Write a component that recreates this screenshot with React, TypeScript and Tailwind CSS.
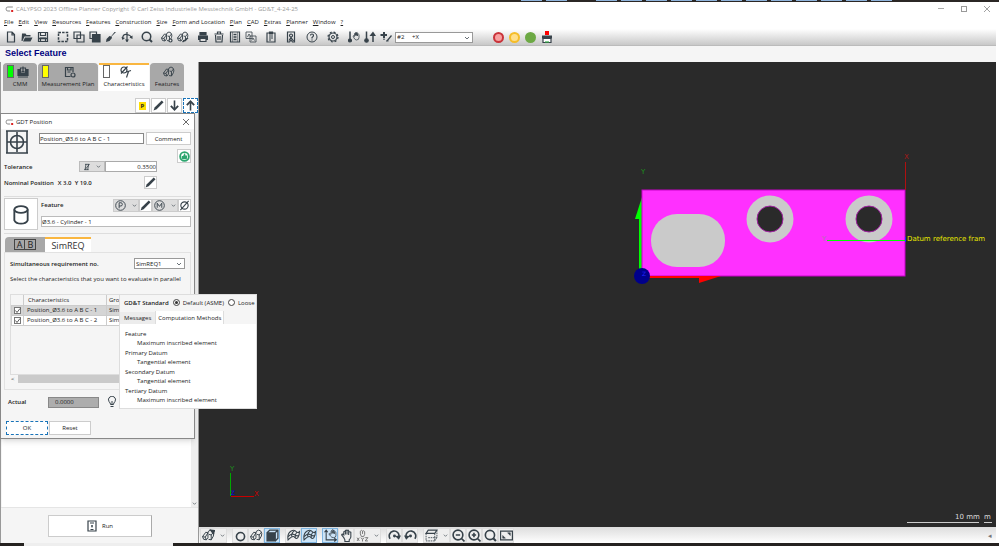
import type { ReactNode } from "react";
import { clsx } from "clsx";

const Icon = ({ name, className = "size-3" }: { name: string; className?: string }) => (
  <svg
    viewBox="0 0 24 24"
    fill="none"
    stroke="currentColor"
    strokeWidth="2.4"
    className={clsx("shrink-0 text-[#37424a]", className)}
    aria-hidden="true"
  >
    {icons[name]}
  </svg>
);

const gem = (
  <g strokeWidth="1.8">
    <path d="M1 14 7 6l4 1v9l-3 4-5-1z" />
    <path d="M1 14l5 1 5-8M6 15l2 5" />
    <path d="M12 4q4-4 8 0 3 4 1 9l-4 7-5-1M12 4l-1 3M13 10l4 1 4-5M17 11v9" />
  </g>
);

const icons: Record<string, ReactNode> = {
  logo: (
    <>
      <path d="M22 6H7Q2 6 2 11v2q0 5 5 5h7" stroke="#888" strokeWidth="3" />
      <path d="M17 15h6v6h-6z" fill="#d22" stroke="none" />
    </>
  ),
  file: <path d="M5 2h9l5 5v15H5zM14 2v6h5" />,
  open: <path d="M2 5h7l2 3h8v3H7l-4 9H1zM8 13h15l-4 8H4z" fill="currentColor" stroke="none" />,
  save: (
    <>
      <path d="M3 3h18v18H3zM7 21v-7h10v7" />
      <path d="M7 3h10v6H7z" />
      <path d="M3 15h18" strokeWidth="3" />
    </>
  ),
  marquee: <path d="M3 3h18v18H3z" strokeDasharray="5 2.2" strokeWidth="3" />,
  copy: <path d="M2 2h13v13H2zM8 8h14v14H8z" />,
  copyFill: (
    <>
      <path d="M2 2h13v13H2z" />
      <path d="M7 7h15v15H7z" fill="currentColor" />
    </>
  ),
  brush: <path d="m22 2-9 9 1 3-5 6-7 2 1-6 6-6 3 1 7-9z" fill="currentColor" stroke="none" />,
  balance: (
    <>
      <path d="M12 2v20M3 15q1-10 9-8t9 6" />
      <path d="m1 12 2 6 5-4M17 13l6 3V9" fill="currentColor" stroke="none" />
      <path d="m8 17 4 5 4-5z" fill="currentColor" stroke="none" />
    </>
  ),
  search: (
    <>
      <circle cx="11" cy="11" r="8.5" strokeWidth="3" />
      <path d="m17 17 5 5" strokeWidth="4" />
    </>
  ),
  gem,
  gemGear: (
    <>
      {gem}
      <circle cx="19" cy="19" r="3" fill="#eee" strokeWidth="2.4" />
    </>
  ),
  gemPen: (
    <>
      {gem}
      <path d="m11 22 11-8" strokeWidth="3" />
    </>
  ),
  gemArrow: (
    <>
      {gem}
      <path d="m16 2 7 1-2 6z" fill="currentColor" />
    </>
  ),
  print: (
    <>
      <path d="M6 3h12v5H6z" fill="currentColor" />
      <path d="M2 9h20v9H2z" fill="currentColor" stroke="none" />
      <path d="M6 15h12v6H6z" fill="#ddd" />
    </>
  ),
  trash: <path d="M3 6h18M9 5V2h6v3M5 8l1 14h12l1-14M10 10v8M14 10v8" />,
  film: (
    <>
      <path d="M3 2h18v20H3z" />
      <path d="M7 3v18M17 3v18" strokeDasharray="2 2" />
      <path d="M9 7h6M9 12h6M9 17h6" strokeWidth="3" />
    </>
  ),
  windows: (
    <g strokeWidth="1.6">
      <path d="M2 2h12v13H2zM10 10h12v12H10z" />
      <path d="M5 12l3-6 3 5M13 19l3-5 3 5" />
    </g>
  ),
  clip: <path d="M4 4h16v18H4zM9 2h6v4H9zM8 10h8M8 14h8M8 18h4" />,
  report: <path d="M5 2h14v20h-4l-3-4-3 4H5zM12 6a3 3 0 1 0 .1 0M8 19l4-6 5 7" />,
  help: (
    <>
      <circle cx="12" cy="12" r="10" strokeWidth="2" />
      <path d="M9 9q0-3 3-3t3 3q0 2-3 4v2M12 17v2" />
    </>
  ),
  gear: (
    <>
      <circle cx="12" cy="12" r="8" />
      <circle cx="12" cy="12" r="10" strokeDasharray="4 3.85" />
      <circle cx="12" cy="12" r="3" strokeWidth="2" />
    </>
  ),
  probeHand: (
    <>
      <path d="M4 1v17" strokeWidth="3" />
      <circle cx="4" cy="19" r="3" fill="currentColor" />
      <path d="M12 14l-2-4q1-2 3 1V5q1-2 2 0v4-6q1-2 2 0v6-5q2-2 2 0v6-3q2-2 3 0v6q0 5-5 5-3 0-5-4z" strokeWidth="1.6" />
    </>
  ),
  probeUp: (
    <>
      <path d="M5 1v17M18 22V5" strokeWidth="3" />
      <circle cx="5" cy="19" r="3.5" fill="currentColor" />
      <path d="m11 10 7-9 6 9z" fill="currentColor" stroke="none" />
    </>
  ),
  probePath: (
    <>
      <path d="M1 8h13M8 2v12" strokeWidth="4" />
      <path d="M8 15v3M14 20l9-11M17 20h-5" />
    </>
  ),
  magazine: (
    <>
      <path d="M8 0h8v8H8z" fill="#f00" stroke="none" />
      <path d="M2 9h20v6H2z" fill="currentColor" stroke="none" />
      <path d="M4 15h16v8H4z" fill="#fff" />
      <path d="M8 22h8" stroke="#3a4" />
    </>
  ),
  cmm: (
    <>
      <path d="M2 7h20v12H2z" fill="currentColor" />
      <path d="M7 4h10v10H7z" fill="#a8a8a8" />
      <path d="M12 1v10M9 11h6M2 22h20" strokeWidth="2.4" />
    </>
  ),
  plan: (
    <>
      <path d="M18 12V3H3v18h10M7 3v5h7V3M7 12h6" />
      <circle cx="18" cy="18" r="4" />
    </>
  ),
  chars: (
    <>
      <circle cx="8" cy="8" r="6" />
      <path d="M2 15 15 1M13 12l9-3M17 11l-4 12" />
    </>
  ),
  pencil: <path d="m1 23 3-7L19 1l4 4L8 20z" fill="currentColor" stroke="none" />,
  down: (
    <>
      <path d="M12 1v18" strokeWidth="3.5" />
      <path d="m4 13 8 8 8-8" strokeWidth="4" />
    </>
  ),
  up: (
    <>
      <path d="M12 23V5" strokeWidth="3.5" />
      <path d="m4 11 8-8 8 8" strokeWidth="4" />
    </>
  ),
  chevron: <path d="m4 8 8 8 8-8" strokeWidth="3" />,
  position: (
    <g strokeWidth="1.6">
      <path d="M1 1h22M2 1v22M1 23h22M22 1v22" />
      <circle cx="12" cy="12" r="6.5" />
      <path d="M12 2v20M2 12h20" />
    </g>
  ),
  thumb: (
    <>
      <circle cx="12" cy="12" r="9.5" fill="#fff" stroke="#2da66f" strokeWidth="4" />
      <path d="M6 11h3l3-6q2 0 2 5h4l-1 8H9l-3-1z" fill="#2da66f" stroke="none" />
    </>
  ),
  cylinder: (
    <g strokeWidth="2.2">
      <ellipse cx="12" cy="6" rx="8" ry="4" />
      <path d="M4 6v13q2 4 8 4t8-4V6" />
    </g>
  ),
  circleP: (
    <g strokeWidth="2">
      <circle cx="12" cy="12" r="10.5" />
      <path d="M9 18V6h4q3 0 3 3.500t-3 3.500H9" />
    </g>
  ),
  circleM: (
    <g strokeWidth="2">
      <circle cx="12" cy="12" r="10.5" />
      <path d="M7 17V7l5 7 5-7v10" />
    </g>
  ),
  diameter: (
    <>
      <circle cx="12" cy="12" r="8" />
      <path d="M3 22 21 2" />
    </>
  ),
  hash: <path d="M9 3 6 21M17 3l-3 18M6 4h13M4 20h13M6 20 19 4" />,
  bulb: <path d="M9 17q0-3-3-6a7 7 0 1 1 12 0q-3 3-3 6zM9 21h6M12 17v-7" strokeWidth="2" />,
  run: (
    <>
      <path d="M4 2h16v20H4z" strokeWidth="2.4" />
      <path d="M8 6h8M12 10v5m-2-3h4M9 19h6" strokeWidth="2" />
    </>
  ),
  ring: <circle cx="12" cy="14" r="7.5" strokeWidth="3" />,
  cube: (
    <>
      <path d="M2 7h15v15H2z" fill="currentColor" />
      <path d="M2 7 7 2h15v15l-5 5M17 7l5-5" />
    </>
  ),
  surface: (
    <g strokeWidth="2">
      <path d="M2 20Q0 9 7 4q7-4 10 1 3 3 6 0 0 7-3 11-3 3-5 0-3-4-7-1-3 2-6 5z" />
      <path d="M2 14q6-6 11-4 5 4 9 2M9 14q-2-6 5-11M15 16q-1-5 3-10" />
    </g>
  ),
  axesHand: (
    <g strokeWidth="2">
      <path d="M4 3v17h18M1 6l3-4 3 4M19 17l4 3-4 3" />
      <path d="M12 13l-3-4q1-2 4 1V4q1-2 2 0v4-6q1-2 2 0v6-5q2-2 2 0v6-3q2-2 3 0v6q0 4-4 4-4 0-6-3z" strokeWidth="1.5" />
    </g>
  ),
  hand: (
    <path
      d="M7 16 3 11q1-3 4 0V5q1.500-2 3 0v5V3q1.500-2 3 0v7V3q2-2 3 0v8V6q2-2 4 0v9q-1 3-3 5v3H9v-3z"
      strokeWidth="2"
    />
  ),
  xyz: (
    <g strokeWidth="1.8" stroke="#777">
      <path d="M8 9V4q2-3 4 0 3-2 4 1v5l-2 4h-4zM12 4v5M2 16l4 6M6 16l-4 6M9 16l3 3 3-3M12 19v4M17 16h5l-5 6h5" />
    </g>
  ),
  rotateCw: (
    <>
      <path d="M4 18A9 9 0 1 1 20 15" strokeWidth="3" />
      <path d="m13 13 7 7 4-8z" fill="currentColor" stroke="none" />
      <circle cx="12" cy="13" r="1.500" fill="currentColor" />
    </>
  ),
  rotateCcw: (
    <>
      <path d="M20 18A9 9 0 1 0 4 15" strokeWidth="3" />
      <path d="m11 13-7 7-4-8z" fill="currentColor" stroke="none" />
      <circle cx="12" cy="13" r="1.500" fill="currentColor" />
    </>
  ),
  box: (
    <>
      <path d="M2 8 6 2h16l-4 6z" strokeWidth="2" />
      <path d="M2 8v14h16V8M22 2v14l-4 6M6 16h16" strokeWidth="1.6" strokeDasharray="3 1.5" />
    </>
  ),
  zoomOut: (
    <>
      <circle cx="11" cy="11" r="9" strokeWidth="3" />
      <path d="m17 17 6 6M7 11h8" strokeWidth="3" />
    </>
  ),
  zoomIn: (
    <>
      <circle cx="11" cy="11" r="9" strokeWidth="3" />
      <path d="m17 17 6 6M7 11h8M11 7v8" strokeWidth="3" />
    </>
  ),
  fit: (
    <>
      <path d="M1 4h22v16H1z" />
      <path d="M5 17v-5l5 5zM19 7v5l-5-5z" fill="currentColor" strokeWidth="1" />
    </>
  ),
};

const toolGroups: { gap: string; items: string[] }[] = [
  { gap: "ml-[3px]", items: ["file", "open", "save"] },
  { gap: "ml-1", items: ["marquee", "copy", "copyFill", "brush", "balance"] },
  { gap: "ml-1", items: ["search"] },
  { gap: "ml-1", items: ["gemGear", "gemPen"] },
  { gap: "ml-1", items: ["print", "trash", "film", "windows"] },
  { gap: "ml-1", items: ["clip"] },
  { gap: "ml-1", items: ["report"] },
  { gap: "ml-[5px]", items: ["help"] },
  { gap: "ml-[5px]", items: ["gear"] },
  { gap: "ml-[5px]", items: ["probeHand", "probeUp", "probePath"] },
];

const menus = [
  "File",
  "Edit",
  "View",
  "Resources",
  "Features",
  "Construction",
  "Size",
  "Form and Location",
  "Plan",
  "CAD",
  "Extras",
  "Planner",
  "Window",
  "?",
];

const Header = () => (
  <header className="shrink-0">
    <div className="flex h-[2px] bg-[#2b2725] pl-[521px] gap-1">
      {Array.from({ length: 15 }, (_, n) => (
        <span
          key={n}
          className={clsx("h-px w-[21px]", n === 2 ? "bg-[#2b2725]" : "bg-[#8fb4dc]")}
        />
      ))}
    </div>
    <div className="flex h-[13px] items-center bg-white pl-[5px] text-[#999]">
      <Icon name="logo" className="h-2 w-[9px]" />
      <h1 className="ml-[2px]">
        CALYPSO 2023 Offline Planner Copyright © Carl Zeiss Industrielle Messtechnik GmbH - GD&T_4-24-25
      </h1>
      <div className="ml-auto flex items-center gap-[17px] pr-[9px]">
        <button aria-label="Minimize" className="h-px w-[6px] bg-[#aaa]" />
        <button aria-label="Maximize" className="size-[6px] border border-[#999]" />
        <button aria-label="Close">
          <svg viewBox="0 0 6 6" className="size-[6px]" stroke="#888" strokeWidth="0.8">
            <path d="m0 0 6 6M6 0 0 6" />
          </svg>
        </button>
      </div>
    </div>
    <nav className="flex h-[14px] items-center gap-[5px] bg-white pl-1">
      {menus.map((menu) => (
        <button key={menu} className="whitespace-nowrap">
          <span className="underline">{menu[0]}</span>
          {menu.slice(1)}
        </button>
      ))}
    </nav>
    <div className="mr-[3px] flex h-[17px] items-center border-b border-[#bbb] bg-linear-to-b from-white to-[#c8c8c8]">
      {toolGroups.map((group) => (
        <div key={group.items[0]} className={clsx("flex", group.gap)}>
          {group.items.map((name) => (
            <button key={name} aria-label={name} className="flex w-4 justify-center">
              <Icon name={name} />
            </button>
          ))}
        </div>
      ))}
      <Select label="Probe" value={"#2\u00a0\u00a0\u00a0\u00a0\u00a0+X"} className="ml-px h-[11px] w-[78px] bg-white" />
      <div className="ml-[20px] flex items-center gap-[5px]">
        <button aria-label="Stop" className="size-[11px] rounded-full border-2 border-[#c9333a] bg-[#f7a0a0]" />
        <button aria-label="Pause" className="size-[11px] rounded-full border-2 border-[#f5bd28] bg-[#ffdf8a]" />
        <button aria-label="Start" className="size-[11px] rounded-full bg-[#6da944]" />
        <button aria-label="Magazine">
          <Icon name="magazine" />
        </button>
      </div>
    </div>
    <h2 className="mr-[3px] flex h-4 items-center bg-[#f5f5f5] pb-px pl-[5px] font-['Liberation_Sans',sans-serif] text-[9px] font-bold text-[#000080]">
      Select Feature
    </h2>
  </header>
);

const Select = ({ label, value, className }: { label: string; value: string; className: string }) => (
  <div className={clsx("relative shrink-0 border border-[#999]", className)}>
    <select aria-label={label} className="block h-full w-full appearance-none pl-px leading-none">
      <option>{value}</option>
    </select>
    <Icon name="chevron" className="pointer-events-none absolute top-[2px] right-[2px] size-[6px]" />
  </div>
);

const tabs = [
  { label: "CMM", icon: "cmm", mark: "bg-[#0f0]", width: "w-[34px]" },
  { label: "Measurement Plan", icon: "plan", mark: "bg-[#ff0]", width: "w-[60px]" },
  { label: "Characteristics", icon: "chars", mark: "bg-white", width: "w-[50px]", active: true },
  { label: "Features", icon: "gem", mark: "", width: "w-[34px]" },
];

const IconButton = ({ name, className }: { name: string; className?: string }) => (
  <button
    aria-label={name}
    className={clsx("flex shrink-0 items-center justify-center border bg-white", className)}
  >
    <Icon name={name} className="size-[11px]" />
  </button>
);

const Sidebar = () => (
  <aside className="flex w-[199px] shrink-0 flex-col border-x border-[#999] bg-[#f5f5f5]">
    <div className="flex gap-px pt-px pl-[2px]">
      {tabs.map((tab) => (
        <button
          key={tab.label}
          className={clsx(
            "flex h-7 flex-col items-center border-t-2",
            tab.width,
            tab.active ? "border-[#f9b640] bg-white" : "rounded-t-sm border-[#a8a8a8] bg-[#a8a8a8]",
          )}
        >
          <span className={clsx("flex h-[13px] w-full items-center justify-between pl-1", tab.mark && "pr-2")}>
            {tab.mark && <span className={clsx("h-[13px] w-[7px] border border-[#666]", tab.mark)} />}
            <Icon name={tab.icon} className={tab.mark ? "size-3" : "mx-auto size-3"} />
            {tab.width !== "w-[34px]" && <span />}
          </span>
          <span className="whitespace-nowrap leading-3">{tab.label}</span>
        </button>
      ))}
    </div>
    <div className="flex h-[22px] items-end justify-end gap-px">
      <button className="flex h-[15px] w-[15px] items-center justify-center border border-[#ccc] bg-white">
        <span className="bg-[#ffdf00] px-[2px] leading-2 font-bold">P</span>
      </button>
      <IconButton name="pencil" className="size-[15px] border-[#ccc]" />
      <IconButton name="down" className="size-[15px] border-[#ccc]" />
      <IconButton name="up" className="size-[15px] border-dashed border-[#1873b8]" />
    </div>
    <div className="flex flex-1 border-b border-[#e5e5e5]">
      <div className="ml-px flex-1 bg-white" />
      <div className="flex w-[7px] items-end justify-center bg-[#eee] pb-px">
        <Icon name="chevron" className="size-[5px]" />
      </div>
    </div>
    <div className="flex h-[35px] items-center justify-center">
      <button className="flex h-[22px] w-[104px] items-center justify-center gap-1 border border-[#ccc] border-r-[#aaa] bg-white">
        <Icon name="run" />
        Run
      </button>
    </div>
  </aside>
);

const Part = () => (
  <svg
    viewBox="0 0 797 465"
    className="block min-h-0 w-full flex-1"
    preserveAspectRatio="xMidYMid meet"
    fontFamily="DejaVu Sans, sans-serif"
    fontSize="7"
  >
    <path d="M440 157h3v57h-3z" fill="#0f0" />
    <path d="m443 135-7 22h7z" fill="#0f0" />
    <rect x="443" y="128" width="263" height="86" fill="#ff30ff" stroke="#c800c8" />
    <path d="M450 215h50" stroke="#f00" strokeWidth="2" />
    <path d="M500 214h22l-22 7z" fill="#f00" />
    <rect x="452" y="152" width="74" height="53" rx="26" fill="#cacaca" />
    {[571, 670].map((cx) => (
      <g key={cx}>
        <circle cx={cx} cy="157" r="23.5" fill="#cacaca" />
        <circle cx={cx} cy="157" r="13" fill="#2a2a2a" stroke="#a020a0" />
      </g>
    ))}
    <circle cx="443" cy="214" r="8" fill="#00008b" />
    <text x="443" y="214" fill="#22f" fontSize="6">Z</text>
    <text x="442" y="112" fill="#1c941c">Y</text>
    <text x="705" y="97" fill="#a81818">X</text>
    <path d="M706.5 100v28" stroke="#b01010" />
    <path d="M628 178.500h78" stroke="#0f0" />
    <text x="623" y="179" fill="#b070b0">Y</text>
    <path d="M706.5 175v5" stroke="#22f" />
    <text x="708" y="179" fill="#e8e800">Datum reference fram</text>

    <path d="M31.5 411v23" stroke="#00a800" />
    <path d="M32 434.500h23" stroke="#c80000" />
    <text x="31" y="409" fill="#1c941c">Y</text>
    <text x="55" y="434" fill="#c80000">X</text>
    <text x="32" y="433" fill="#00f" fontSize="6">Z</text>

    <path d="M708 460.500h72M785 460.500h8" stroke="#ccc" />
    <text x="756" y="457" fill="#ddd">10 mm</text>
    <text x="785" y="457" fill="#ddd">m</text>
  </svg>
);

const viewTools: { name: string; on?: boolean; menu?: boolean; gap?: boolean }[] = [
  { name: "gemArrow", menu: true },
  { name: "ring", gap: true },
  { name: "gem" },
  { name: "cube", on: true },
  { name: "surface", gap: true },
  { name: "surface", on: true },
  { name: "axesHand", on: true, gap: true },
  { name: "hand" },
  { name: "xyz", menu: true },
  { name: "rotateCw", gap: true },
  { name: "rotateCcw" },
  { name: "box", menu: true, gap: true },
  { name: "zoomOut" },
  { name: "zoomIn" },
  { name: "search" },
  { name: "fit" },
];

const ViewBar = () => (
  <div className="flex h-4 shrink-0 items-end bg-linear-to-b from-[#ddd] to-white pl-px">
    {viewTools.map((tool, i) => (
      <button
        key={i}
        aria-label={tool.name}
        className={clsx(
          "flex h-[15px] items-center border",
          tool.gap && "ml-[5px]",
          tool.menu ? "w-[27px] justify-between px-px" : "w-4 justify-center",
          tool.on ? "border-[#7fb5e0] bg-[#cce4f7]" : "border-[#ddd] bg-[#eee]",
        )}
      >
        <Icon name={tool.name} className="size-[13px]" />
        {tool.menu && <Icon name="chevron" className="size-[5px]" />}
      </button>
    ))}
    <span className="ml-auto pr-1 text-[7px] leading-[14px] text-[#777]">◂</span>
  </div>
);

const rows = ["Position_Ø3.6 to A B C - 1", "Position_Ø3.6 to A B C - 2"];

const Dialog = () => (
  <section className="absolute top-[113px] left-0 w-[195px] border border-[#888] bg-[#f5f5f5] pb-[3px] shadow-md">
    <div className="flex h-[15px] items-center bg-white pr-[5px] pl-1">
      <Icon name="logo" className="h-2 w-[9px]" />
      <h3 className="ml-[2px]">GDT Position</h3>
      <button aria-label="Close dialog" className="ml-auto">
        <svg viewBox="0 0 6 6" className="size-[6px]" stroke="#444" strokeWidth="0.8">
          <path d="m0 0 6 6M6 0 0 6" />
        </svg>
      </button>
    </div>
    <div className="px-[3px]">
      <div className="flex h-5 pt-px pl-px">
        <Icon name="position" className="size-6" />
        <input
          aria-label="Name"
          defaultValue="Position_Ø3.6 to A B C - 1"
          className="mt-[3px] ml-[10px] h-[11px] w-[105px] border border-[#888] bg-white"
        />
        <button className="mt-[2px] ml-[2px] h-[13px] flex-1 border border-[#ccc] bg-white leading-none">
          Comment
        </button>
      </div>
      <div className="flex h-3 justify-end">
        <IconButton name="thumb" className="size-[14px] border-[#ccc]" />
      </div>
      <div className="flex h-[11px] items-center">
        <label htmlFor="tolerance" className="w-[75px] font-semibold">
          Tolerance
        </label>
        <button
          aria-label="Tolerance type"
          className="flex h-[11px] w-[26px] items-center justify-between border border-[#bbb] bg-[#ddd] px-[3px]"
        >
          <Icon name="hash" className="size-2" />
          <Icon name="chevron" className="size-[5px]" />
        </button>
        <input
          id="tolerance"
          defaultValue="0.3500"
          className="h-[11px] w-[52px] border border-[#aaa] bg-white text-right"
        />
      </div>
      <div className="mt-1 flex h-[13px] items-center">
        <span className="font-semibold">Nominal Position</span>
        <span className="ml-1 font-semibold">X 3.0 &nbsp;Y 19.0</span>
        <IconButton name="pencil" className="mr-[34px] ml-auto size-[13px] border-[#ccc]" />
      </div>
      <hr className="mt-[7px] border-[#ddd]" />
      <div className="mt-px flex gap-[3px]">
        <button aria-label="Cylinder" className="flex h-8 w-[34px] items-center justify-center border border-[#ccc] bg-white">
          <Icon name="cylinder" className="h-[21px] w-5" />
        </button>
        <div className="flex-1">
          <div className="flex h-[14px] items-center">
            <label htmlFor="feature" className="mr-auto font-semibold">
              Feature
            </label>
            {["circleP", "pencil", "circleM", "diameter"].map((name) =>
              name.startsWith("circle") ? (
                <button
                  key={name}
                  aria-label={name}
                  className="flex h-[13px] w-[26px] items-center justify-between border border-[#ccc] bg-[#ddd] px-px"
                >
                  <Icon name={name} className="size-[11px]" />
                  <Icon name="chevron" className="size-[5px]" />
                </button>
              ) : (
                <IconButton key={name} name={name} className="size-[13px] border-[#ccc]" />
              ),
            )}
          </div>
          <input
            id="feature"
            defaultValue="Ø3.6 - Cylinder - 1"
            className="mt-1 block h-[11px] w-full border border-[#bbb] bg-white"
          />
        </div>
      </div>
      <hr className="mt-[3px] border-[#ddd]" />
      <div className="mt-[3px] flex pl-px">
        <button
          aria-label="Datums"
          className="flex h-[15px] w-10 items-center justify-center rounded-tl-sm bg-[#a8a8a8] text-[9px] leading-none"
        >
          <span className="border border-r-0 border-[#444] px-[2px]">A</span>
          <span className="border border-[#444] px-[2px]">B</span>
        </button>
        <button className="h-[15px] w-[46px] border-t-2 border-[#f9b640] bg-white text-[9px] leading-none text-[#333]">
          SimREQ
        </button>
      </div>
      <div className="border border-[#e2e2e2] px-[5px] pt-[5px] pb-[6px]">
        <div className="flex items-center justify-between">
          <span className="font-semibold">Simultaneous requirement no.</span>
          <Select label="Simultaneous requirement no." value="SimREQ1" className="h-[11px] w-[51px] bg-white" />
        </div>
        <p className="mt-[5px] h-[10px] leading-[10px] whitespace-nowrap">
          Select the characteristics that you want to evaluate in parallel
        </p>
        <div className="mt-[10px] h-[81px] border border-[#ddd]">
          <table className="w-full table-fixed border-collapse text-left">
            <thead>
              <tr className="h-[10px]">
                <th className="w-3 border-r border-[#ccc]" />
                <th className="w-[83px] border-r border-[#ccc] pl-1 leading-none font-normal">Characteristics</th>
                <th className="pl-[2px] leading-none font-normal">Gro</th>
              </tr>
            </thead>
            <tbody>
              {rows.map((row, i) => (
                <tr key={row} className={clsx("h-[10px] border border-[#ccc]", i === 0 ? "bg-[#d5d5d5]" : "bg-white")}>
                  <td className="border-r border-[#ccc] pl-[2px]">
                    <Check label={row} />
                  </td>
                  <td className="border-r border-[#ccc] pl-[3px] leading-none whitespace-nowrap">{row}</td>
                  <td className="pl-[2px] leading-none">Sim</td>
                </tr>
              ))}
            </tbody>
          </table>
        </div>
        <div className="flex h-2 items-center gap-1 pl-px">
          <span>&lt;</span>
          <span className="h-2 flex-1 bg-[#cacaca]" />
        </div>
      </div>
      <div className="mt-1 flex h-4 items-center pl-1">
        <label htmlFor="actual" className="w-10 font-semibold">
          Actual
        </label>
        <input
          id="actual"
          defaultValue="0.0000"
          className="h-[11px] w-[51px] border border-[#888] bg-[#adadad] pl-[6px]"
        />
        <Icon name="bulb" className="ml-[7px] size-3" />
      </div>
      <div className="mt-[11px] flex gap-px pl-[2px]">
        <button className="h-[14px] w-[42px] border border-dashed border-[#1873b8] bg-white leading-none">OK</button>
        <button className="h-[14px] w-[42px] border border-[#ccc] bg-white leading-none">Reset</button>
      </div>
    </div>
  </section>
);

const Check = ({ label }: { label: string }) => (
  <span className="relative block size-[7px]">
    <input
      type="checkbox"
      defaultChecked
      aria-label={label}
      className="block size-[7px] appearance-none border border-[#777] bg-white"
    />
    <svg viewBox="0 0 7 7" className="pointer-events-none absolute inset-0" fill="none" stroke="#333" strokeWidth="0.8">
      <path d="m1.500 3.500 1.500 2 3-4" />
    </svg>
  </span>
);

const methods = [
  { name: "Feature", value: "Maximum inscribed element" },
  { name: "Primary Datum", value: "Tangential element" },
  { name: "Secondary Datum", value: "Tangential element" },
  { name: "Tertiary Datum", value: "Maximum inscribed element" },
];

const Tooltip = () => (
  <section className="absolute top-[294px] left-[119px] h-[115px] w-[138px] border border-[#ddd] bg-white">
    <div className="flex h-[15px] items-center bg-[#f5f5f5] pl-1">
      <span className="font-semibold whitespace-nowrap">GD&T Standard</span>
      {["Default (ASME)", "Loose"].map((label, i) => (
        <label key={label} className="ml-1 flex items-center gap-[3px] whitespace-nowrap">
          <input
            type="radio"
            name="standard"
            defaultChecked={i === 0}
            className="size-[7px] appearance-none rounded-full border border-[#444] bg-white checked:bg-[#333] checked:bg-clip-content checked:p-px"
          />
          {label}
        </label>
      ))}
    </div>
    <div className="flex h-[14px] items-end bg-[#f5f5f5]">
      <button className="h-3 bg-[#ececec] px-1">Messages</button>
      <button className="h-[13px] border-x border-[#ddd] bg-white px-[2px]">Computation Methods</button>
    </div>
    <dl className="mt-[6px] pl-[5px] leading-[9px]">
      {methods.map((m, i) => (
        <div key={m.name} className={clsx(i > 0 && "mt-px")}>
          <dt>{m.name}</dt>
          <dd className="pl-3">{m.value}</dd>
        </div>
      ))}
    </dl>
  </section>
);

export default function App() {
  return (
    <div className="relative flex h-screen flex-col overflow-hidden bg-white font-['Open_Sans',sans-serif] text-[6px] leading-none text-[#222]">
      <Header />
      <main className="flex min-h-0 flex-1">
        <Sidebar />
        <div className="mr-[3px] flex min-w-0 flex-1 flex-col bg-[#2a2a2a]">
          <Part />
          <ViewBar />
        </div>
      </main>
      <footer className="h-[3px] shrink-0 bg-[#252220] pl-6">
        <div className="h-[3px] w-[149px] bg-[#eee]" />
      </footer>
      <Dialog />
      <Tooltip />
    </div>
  );
}
